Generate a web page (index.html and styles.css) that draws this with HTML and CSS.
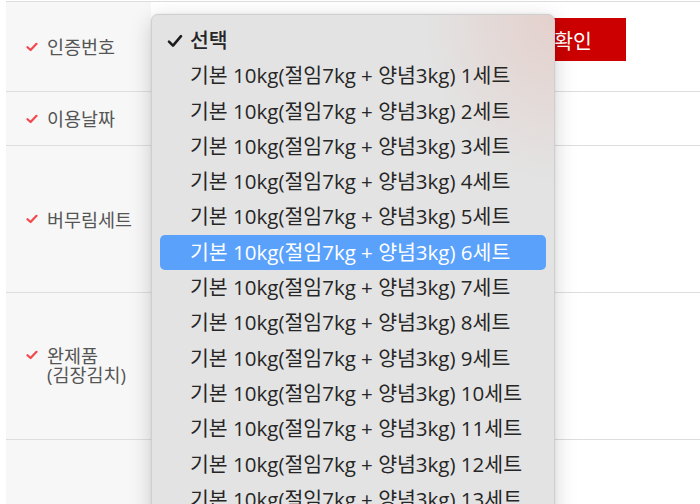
FILE: index.html
```html
<!DOCTYPE html>
<html lang="ko">
<head>
    <meta charset="UTF-8">
    <meta name="viewport" content="width=device-width, initial-scale=1.0">
    <title>김장 예약</title>
    <link rel="stylesheet" href="styles.css">
</head>
<body>
    <!-- Order form -->
    <div class="form-table">
        <div class="form-row row-auth">
            <div class="form-label">
                <svg class="req" viewBox="0 0 12 10"><path d="M1.5 5.2 L4.6 8 L10.5 1.8" /></svg>
                <span>인증번호</span>
            </div>
            <div class="form-field">
                <div class="auth-input"></div>
                <button class="btn-confirm">확인</button>
            </div>
        </div>
        <div class="form-row row-date">
            <div class="form-label">
                <svg class="req" viewBox="0 0 12 10"><path d="M1.5 5.2 L4.6 8 L10.5 1.8" /></svg>
                <span>이용날짜</span>
            </div>
            <div class="form-field"></div>
        </div>
        <div class="form-row row-tall">
            <div class="form-label">
                <svg class="req" viewBox="0 0 12 10"><path d="M1.5 5.2 L4.6 8 L10.5 1.8" /></svg>
                <span>버무림세트</span>
            </div>
            <div class="form-field"></div>
        </div>
        <div class="form-row row-tall">
            <div class="form-label label-top">
                <svg class="req" viewBox="0 0 12 10"><path d="M1.5 5.2 L4.6 8 L10.5 1.8" /></svg>
                <span>완제품<br>(김장김치)</span>
            </div>
            <div class="form-field"></div>
        </div>
        <div class="form-row row-tall">
            <div class="form-label"></div>
            <div class="form-field"></div>
        </div>
    </div>

    <!-- Open select menu -->
    <ul class="select-menu">
        <li class="option selected">
            <svg class="tick" viewBox="0 0 16 14"><path d="M2 7.6 L6 11.6 L14 2.2" /></svg>
            선택
        </li>
    </ul>

    <script>
        const menu = document.querySelector('.select-menu');
        for (let i = 1; i <= 13; i++) {
            const item = document.createElement('li');
            item.className = 'option' + (i === 6 ? ' active' : '');
            item.textContent = '기본 10kg(절임7kg + 양념3kg) ' + i + '세트';
            menu.appendChild(item);
        }
    </script>
</body>
</html>
```

FILE: styles.css
```css
/* Global styling */
* {
    margin: 0;
    padding: 0;
    box-sizing: border-box;
}
html, body {
    width: 100%;
    height: 100%;
    overflow: hidden;
    background-color: #fff;
    font-family: "Open Sans", "Noto Sans CJK KR", sans-serif;
    color: #555;
}
/* Form table */
.form-table {
    margin: 1px 0 0 6px;
    border-top: 1px solid #dedede;
}
.form-row {
    display: flex;
    border-bottom: 1px solid #dedede;
}
.row-auth {
    height: 90px;
}
.row-date {
    height: 54px;
}
.row-tall {
    height: 147px;
}
.form-label {
    width: 145px;
    display: flex;
    align-items: center;
    gap: 9px;
    padding-left: 20px;
    background-color: #f7f7f7;
    font-size: 18.5px;
    line-height: 19px;
}
.label-top {
    align-items: flex-start;
    padding-top: 53px;
}
.label-top .req {
    margin-top: 4px;
}
.req {
    width: 12px;
    height: 10px;
    flex-shrink: 0;
}
.req path {
    fill: none;
    stroke: #f2474b;
    stroke-width: 2.2;
    stroke-linecap: round;
    stroke-linejoin: round;
}
.form-field {
    flex: 1;
    display: flex;
    align-items: flex-start;
    gap: 14px;
    padding: 16px 0 0 20px;
}
.auth-input {
    width: 335px;
    height: 43px;
    border: 1px solid #ccc;
}
.btn-confirm {
    width: 106px;
    height: 43px;
    border: none;
    background-color: #cc0000;
    color: #fff;
    font-family: inherit;
    font-size: 20.5px;
    font-weight: 400;
}
/* Select dropdown */
.select-menu {
    position: absolute;
    left: 151px;
    top: 14px;
    width: 404px;
    height: 520px;
    list-style: none;
    padding: 8px 8px 0;
    border: 1px solid #cfcfcf;
    border-radius: 7px;
    background:
        radial-gradient(ellipse at 100% 0, rgba(228, 205, 200, 0.85) 0, rgba(228, 205, 200, 0) 130px),
        #e3e3e3;
    box-shadow: 0 6px 22px rgba(0, 0, 0, 0.18), 0 0 3px rgba(0, 0, 0, 0.08);
}
.option {
    position: relative;
    height: 35.3px;
    line-height: 35.3px;
    padding-left: 30px;
    border-radius: 5px;
    font-size: 20.5px;
    color: #262626;
    white-space: nowrap;
}
.option.active {
    background-color: #5aa1fc;
    color: #fff;
}
.selected {
    font-weight: 500;
}
.tick {
    position: absolute;
    left: 7px;
    top: 11px;
    width: 16px;
    height: 14px;
}
.tick path {
    fill: none;
    stroke: #1c1c1c;
    stroke-width: 2.6;
    stroke-linecap: round;
    stroke-linejoin: round;
}
```
